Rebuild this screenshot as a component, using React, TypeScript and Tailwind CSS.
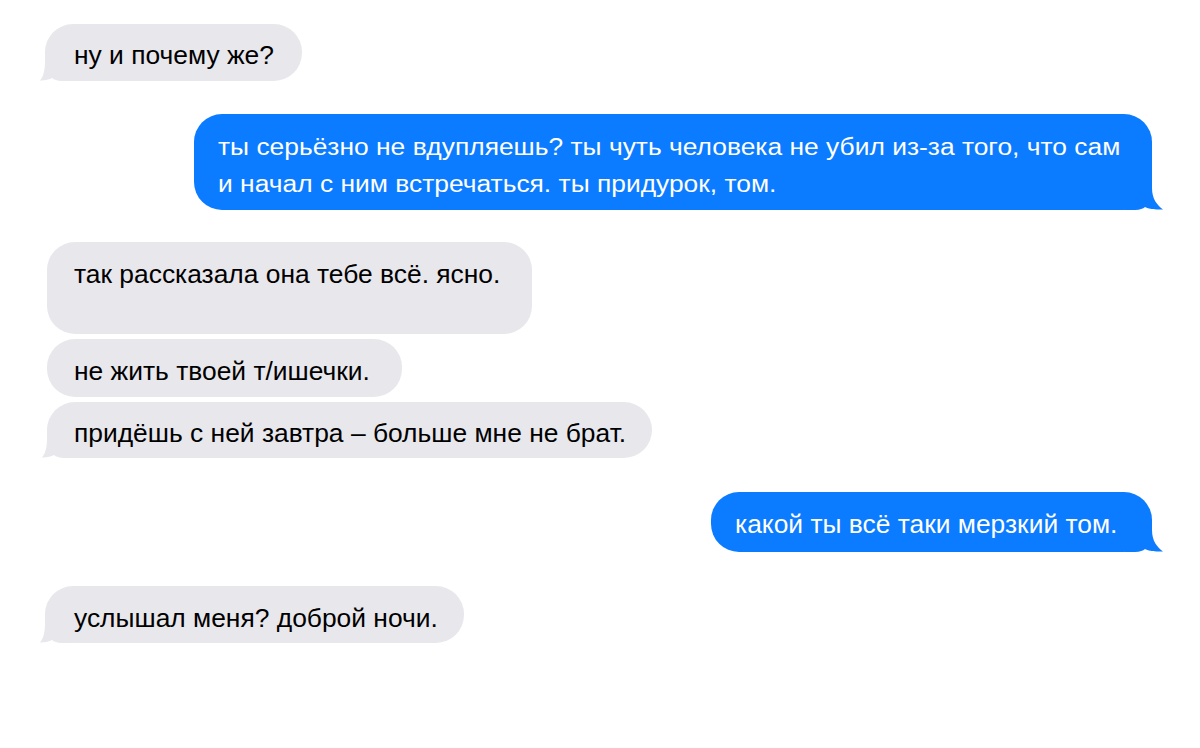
import React from "react";

const GRAY = "#e8e7ec";
const BLUE = "#0b7bff";

function LeftTail() {
  return (
    <svg className="absolute bottom-0 left-[-5px]" width="32" height="30" viewBox="0 0 32 30">
      <path
        d="M5 0 L32 0 L32 30 L22 30 C17 30 14 28.6 12 27 C9 28.8 4.5 29.6 0 29.4 C3.5 25.5 5 19 5 10 Z"
        fill={GRAY}
      />
    </svg>
  );
}

function RightTail() {
  return (
    <svg className="absolute bottom-0 right-[-11px]" width="38" height="32" viewBox="0 0 38 32">
      <path
        d="M27 0 L0 0 L0 32 L10 32 C15 32 18 30.6 20 29 C23 31 30 31.8 38 31.4 C32 27 27 21 27 10 Z"
        fill={BLUE}
      />
    </svg>
  );
}

function Gray({
  children,
  className,
  tail,
}: {
  children: React.ReactNode;
  className: string;
  tail?: boolean;
}) {
  return (
    <div className={"relative rounded-[28px] bg-[#e8e7ec] text-black " + className}>
      {tail && <LeftTail />}
      <div className="relative whitespace-nowrap">{children}</div>
    </div>
  );
}

function Blue({ children, className }: { children: React.ReactNode; className: string }) {
  return (
    <div className={"relative self-end rounded-[28px] bg-[#0b7bff] text-white " + className}>
      <RightTail />
      <div className="relative">{children}</div>
    </div>
  );
}

export default function App() {
  return (
    <div
      className="w-[1200px] h-[748px] bg-white flex flex-col items-start pl-[45px] pr-[48px] pt-[24px] text-[26.4px] leading-[30px]"
      style={{ fontFamily: '"Liberation Sans", Arial, sans-serif' }}
    >
      <Gray tail className="h-[57px] pl-[29px] pr-[28px] pt-[16px]">
        ну и почему же?
      </Gray>

      <Blue className="mt-[33px] w-[958px] h-[96px] pl-[24px] pt-[17px] leading-[37px]">
        <div className="whitespace-nowrap origin-top scale-y-[0.9]">
          ты серьёзно не вдупляешь? ты чуть человека не убил из-за того, что сам
        </div>
        <div className="whitespace-nowrap origin-top scale-y-[0.9]">
          и начал с ним встречаться. ты придурок, том.
        </div>
      </Blue>

      <Gray className="ml-[2px] mt-[32px] w-[485px] h-[92px] rounded-[26px] pl-[27px] pt-[17px]">
        так рассказала она тебе всё. ясно.
      </Gray>

      <Gray className="ml-[2px] mt-[5px] h-[58px] pl-[27px] pr-[32px] pt-[17px]">
        не жить твоей т/ишечки.
      </Gray>

      <Gray tail className="ml-[2px] mt-[5px] h-[56px] pl-[27px] pr-[26px] pt-[16px]">
        придёшь с ней завтра – больше мне не брат.
      </Gray>

      <Blue className="mt-[34px] w-[441px] h-[60px] pl-[24px] pt-[17px]">
        <div className="whitespace-nowrap">какой ты всё таки мерзкий том.</div>
      </Blue>

      <Gray tail className="mt-[34px] h-[57px] pl-[29px] pr-[26px] pt-[17px]">
        услышал меня? доброй ночи.
      </Gray>
    </div>
  );
}
